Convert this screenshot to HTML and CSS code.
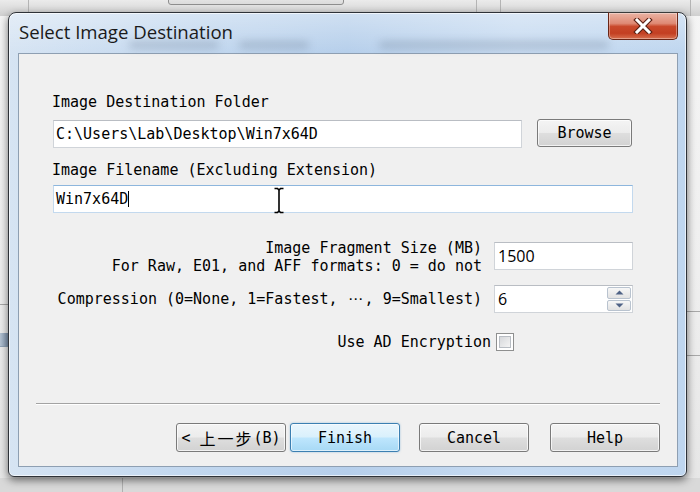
FILE: index.html
```html
<!DOCTYPE html>
<html>
<head>
<meta charset="utf-8">
<title>Select Image Destination</title>
<link rel="stylesheet" href="styles.css">
</head>
<body>
<div class="desk">
  <div class="bgwin">
    <div class="bg-top">
      <div class="bg-btn"></div>
      <div class="bg-v v1"></div>
      <div class="bg-v v2"></div>
      <div class="bg-v v3"></div>
      <div class="bg-v v4"></div>
    </div>
    <div class="bg-h h1"></div>
    <div class="bg-h h2"></div>
    <div class="bg-tab"></div>
    <div class="bg-h h3"></div>
    <div class="bg-h h4"></div>
    <div class="bg-bottom"><div class="bg-v v5"></div></div>
  </div>

  <div class="dialog">
    <div class="titlebar">
      <div class="title">Select Image Destination</div>
      <div class="glass"><span class="g1"></span><span class="g2"></span><span class="g3"></span></div>
      <div class="close">
        <svg width="20" height="16" viewBox="0 0 20 16">
          <path d="M4 2 L16 14 M16 2 L4 14" stroke="#5a2014" stroke-width="5.2" stroke-linecap="square" fill="none"/>
          <path d="M4 2 L16 14 M16 2 L4 14" stroke="#ffffff" stroke-width="3" stroke-linecap="square" fill="none"/>
        </svg>
      </div>
    </div>

    <div class="client">
      <div class="form">
        <div class="label">Image Destination Folder</div>
        <div class="row folder">
          <div class="input folder-input">C:\Users\Lab\Desktop\Win7x64D</div>
          <div class="btn browse">Browse</div>
        </div>

        <div class="label label2">Image Filename (Excluding Extension)</div>
        <div class="input name-input focus">Win7x64D<span class="caret"></span>
          <svg class="ibeam" width="12" height="27" viewBox="0 0 12 27">
            <path d="M1.5 1.5 H4.5 L6 3 L7.5 1.5 H10.5 M6 3 V24 M1.5 25.5 H4.5 L6 24 L7.5 25.5 H10.5" stroke="#000" stroke-width="1.6" fill="none"/>
          </svg>
        </div>

        <div class="row rrow frag">
          <div class="rlabel">Image Fragment Size (MB)<br>For Raw, E01, and AFF formats: 0 = do not</div>
          <div class="input num">1500</div>
        </div>

        <div class="row rrow comp">
          <div class="rlabel">Compression (0=None, 1=Fastest, <span class="ell">⋯</span>, 9=Smallest)</div>
          <div class="input num spin">
            <span class="val">6</span>
            <div class="spinbtns">
              <div class="sb"><svg width="9" height="5" viewBox="0 0 9 5"><path d="M0.5 4.5 L4.5 0.5 L8.5 4.5 Z" fill="#4f6285"/></svg></div>
              <div class="sb"><svg width="9" height="5" viewBox="0 0 9 5"><path d="M0.5 0.5 L4.5 4.5 L8.5 0.5 Z" fill="#4f6285"/></svg></div>
            </div>
          </div>
        </div>

        <div class="row rrow enc">
          <div class="rlabel">Use AD Encryption</div>
          <div class="check"><div class="check-in"></div></div>
        </div>
      </div>

      <div class="sep"></div>

      <div class="buttons">
        <div class="btn back">&lt; <span class="cjk">上一步</span>(B)</div>
        <div class="btn finish">Finish</div>
        <div class="btn cancel">Cancel</div>
        <div class="btn help">Help</div>
      </div>
    </div>
  </div>
</div>
</body>
</html>
```

FILE: styles.css
```css
* { box-sizing: border-box; }
html, body { margin: 0; padding: 0; }
body {
  width: 700px;
  height: 492px;
  overflow: hidden;
  background: #ededed;
  font-family: "DejaVu Sans Mono", "Liberation Mono", monospace;
  color: #000;
}

.desk {
  position: relative;
  width: 700px;
  height: 492px;
  padding: 12px 0 0 8px;
}

/* ---------- background window (behind the dialog) ---------- */
.bgwin {
  position: absolute;
  inset: 0;
  background: linear-gradient(#f5f5f5, #efefef 55%, #e6e6e6);
}
.bg-top {
  position: absolute;
  left: 0; top: 0;
  width: 700px; height: 16px;
  background: linear-gradient(#ebebeb, #d0d0d0);
}
.bg-btn {
  position: absolute;
  left: 168px; top: -6px;
  width: 176px; height: 11px;
  border: 1px solid #8e8e8e;
  border-radius: 3px;
  background: linear-gradient(#ececec, #dcdcdc);
}
.bg-v { position: absolute; top: 0; width: 1px; height: 16px; background: #b4b4b4; }
.v1 { left: 28px; }
.v2 { left: 476px; }
.v3 { left: 500px; }
.v4 { left: 690px; }
.bg-h { position: absolute; height: 1px; background: #a8a8a8; }
.h1 { left: 0; top: 304px; width: 10px; }
.h2 { left: 0; top: 346px; width: 10px; background: #8fa2b6; }
.bg-tab {
  position: absolute; left: 0; top: 333px; width: 9px; height: 13px;
  background: linear-gradient(90deg, #b5c3d3, #7d93ad);
}
.h3 { left: 686px; top: 311px; width: 14px; }
.h4 { left: 686px; top: 355px; width: 14px; }
.bg-bottom {
  position: absolute; left: 0; top: 478px; width: 700px; height: 14px;
  background: #d9d9d9;
}
.v5 { left: 122px; height: 14px; background: #b0b0b0; }

/* ---------- dialog frame ---------- */
.dialog {
  position: relative;
  width: 679px;
  height: 465px;
  border: 1px solid #2e3238;
  border-radius: 8px 8px 6px 6px;
  background:
    linear-gradient(rgba(255,255,255,0.35), rgba(255,255,255,0) 40px),
    linear-gradient(90deg, #d6e4f3 0%, #c3d8ef 25%, #b6cfeb 50%, #c7dbf1 75%, #bfd6ef 100%);
  box-shadow: 0 3px 9px rgba(0,0,0,0.55), inset 0 0 0 1px rgba(255,255,255,0.65);
  display: flex;
  flex-direction: column;
}

.titlebar {
  position: relative;
  height: 40px;
  display: flex;
  align-items: flex-start;
}
.title {
  flex: 1;
  padding: 7px 0 0 10px;
  font-family: "Open Sans", "Noto Sans", sans-serif;
  font-size: 18.6px;
  line-height: 24px;
  color: #1a1a1a;
}
.glass {
  position: absolute;
  left: 120px; top: 27px;
  width: 480px; height: 12px;
  filter: blur(4px);
  opacity: 0.35;
}
.glass span { position: absolute; top: 2px; height: 6px; background: #5a6a80; border-radius: 3px; }
.g1 { left: 0; width: 90px; }
.g2 { left: 110px; width: 70px; }
.g3 { left: 250px; width: 230px; }

.close {
  width: 70px;
  height: 28px;
  margin: -1px 8px 0 0;
  border: 1px solid #6a2616;
  border-top-color: #3b3b3b;
  border-radius: 0 0 5px 5px;
  background: linear-gradient(#eab3a4 0%, #df8a74 40%, #c9492b 52%, #c33f22 78%, #d8704f 100%);
  box-shadow: inset 0 0 0 1px rgba(255,255,255,0.35);
  display: flex;
  align-items: center;
  justify-content: center;
}

/* ---------- client area ---------- */
.client {
  flex: 1;
  margin: 0 8px 9px 9px;
  border: 1px solid #8e9fb2;
  background: #f0f0f0;
  display: flex;
  flex-direction: column;
}

.form {
  padding-left: 33px;
  width: 615px;
  font-size: 15px;
  line-height: 18px;
}
.label { margin-top: 39px; height: 18px; white-space: pre; }
.label2 { margin-top: 13px; }

.row { display: flex; }
.folder { margin-top: 8px; align-items: flex-start; height: 29px; }

.input {
  height: 28px;
  border: 1px solid #d0d4d9;
  border-top-color: #b9bdc3;
  background: #fff;
  font-size: 15px;
  line-height: 26px;
  padding-left: 2px;
  white-space: pre;
}
.folder-input { width: 469px; margin: 1px 0 0 1px; }

.btn {
  height: 28px;
  border: 1px solid #7a7a7a;
  border-radius: 3px;
  background: linear-gradient(#f4f4f4 0%, #ececec 48%, #dedede 52%, #d2d2d2 100%);
  box-shadow: inset 0 0 0 1px rgba(255,255,255,0.7);
  display: flex;
  align-items: center;
  justify-content: center;
  font-size: 15px;
  white-space: pre;
}
.browse { width: 95px; margin-left: 15px; }

.name-input {
  position: relative;
  width: 580px;
  margin: 6px 0 0 1px;
  border-color: #c3d9ee;
  border-top-color: #8db6dd;
}
.caret {
  display: inline-block;
  width: 1px;
  height: 16px;
  background: #000;
  vertical-align: -3px;
}
.ibeam { position: absolute; left: 219px; top: 1px; }

.rrow { justify-content: flex-end; }
.rlabel { text-align: right; white-space: pre; }
.num {
  width: 139px;
  font-family: "Open Sans", "Noto Sans", sans-serif;
  font-size: 16px;
  padding-left: 3px;
}
.frag { margin-top: 26px; gap: 12px; padding-right: 1px; }
.frag .num { margin-top: 3px; }
.comp { margin-top: 10px; gap: 12px; align-items: center; padding-right: 1px; }
.ell {
  display: inline-block;
  width: 18px;
  text-align: center;
  font-family: "DejaVu Sans", sans-serif;
}
.spin { display: flex; padding-right: 0; }
.spin .val { flex: 1; }
.spinbtns {
  width: 25px;
  display: flex;
  flex-direction: column;
  gap: 1px;
  padding: 1px 1px 1px 0;
}
.sb {
  flex: 1;
  border: 1px solid #b9c3cf;
  border-radius: 2px;
  background: linear-gradient(#f7f7f7, #e2e2e2);
  display: flex;
  align-items: center;
  justify-content: center;
}

.enc { margin-top: 20px; gap: 5px; align-items: center; padding-right: 120px; }
.check {
  width: 18px; height: 18px;
  border: 1px solid #8e8f8f;
  background: #fff;
  padding: 2px;
}
.check-in {
  width: 100%; height: 100%;
  border: 1px solid #b8bdc3;
  background: linear-gradient(135deg, #d6d8db, #f4f4f4);
}

.sep {
  margin: 52px 17px 0 17px;
  height: 2px;
  border-top: 1px solid #a3a3a3;
  border-bottom: 1px solid #ffffff;
}

.buttons {
  display: flex;
  justify-content: flex-end;
  padding-right: 17px;
  margin-top: 18px;
}
.buttons .btn { width: 110px; height: 29px; }
.back { margin-right: 4px; }
.finish {
  margin-right: 19px;
  border-color: #3c7fb1;
  background: linear-gradient(#eaf6fd 0%, #d9f0fc 48%, #bee6fd 52%, #a7d9f5 100%);
  box-shadow: inset 0 0 0 1px rgba(255,255,255,0.6), 0 0 2px rgba(60,140,200,0.5);
}
.cancel { margin-right: 21px; }
.cjk {
  font-family: "Noto Sans CJK SC", sans-serif;
  font-size: 16px;
  letter-spacing: 2px;
}
```
